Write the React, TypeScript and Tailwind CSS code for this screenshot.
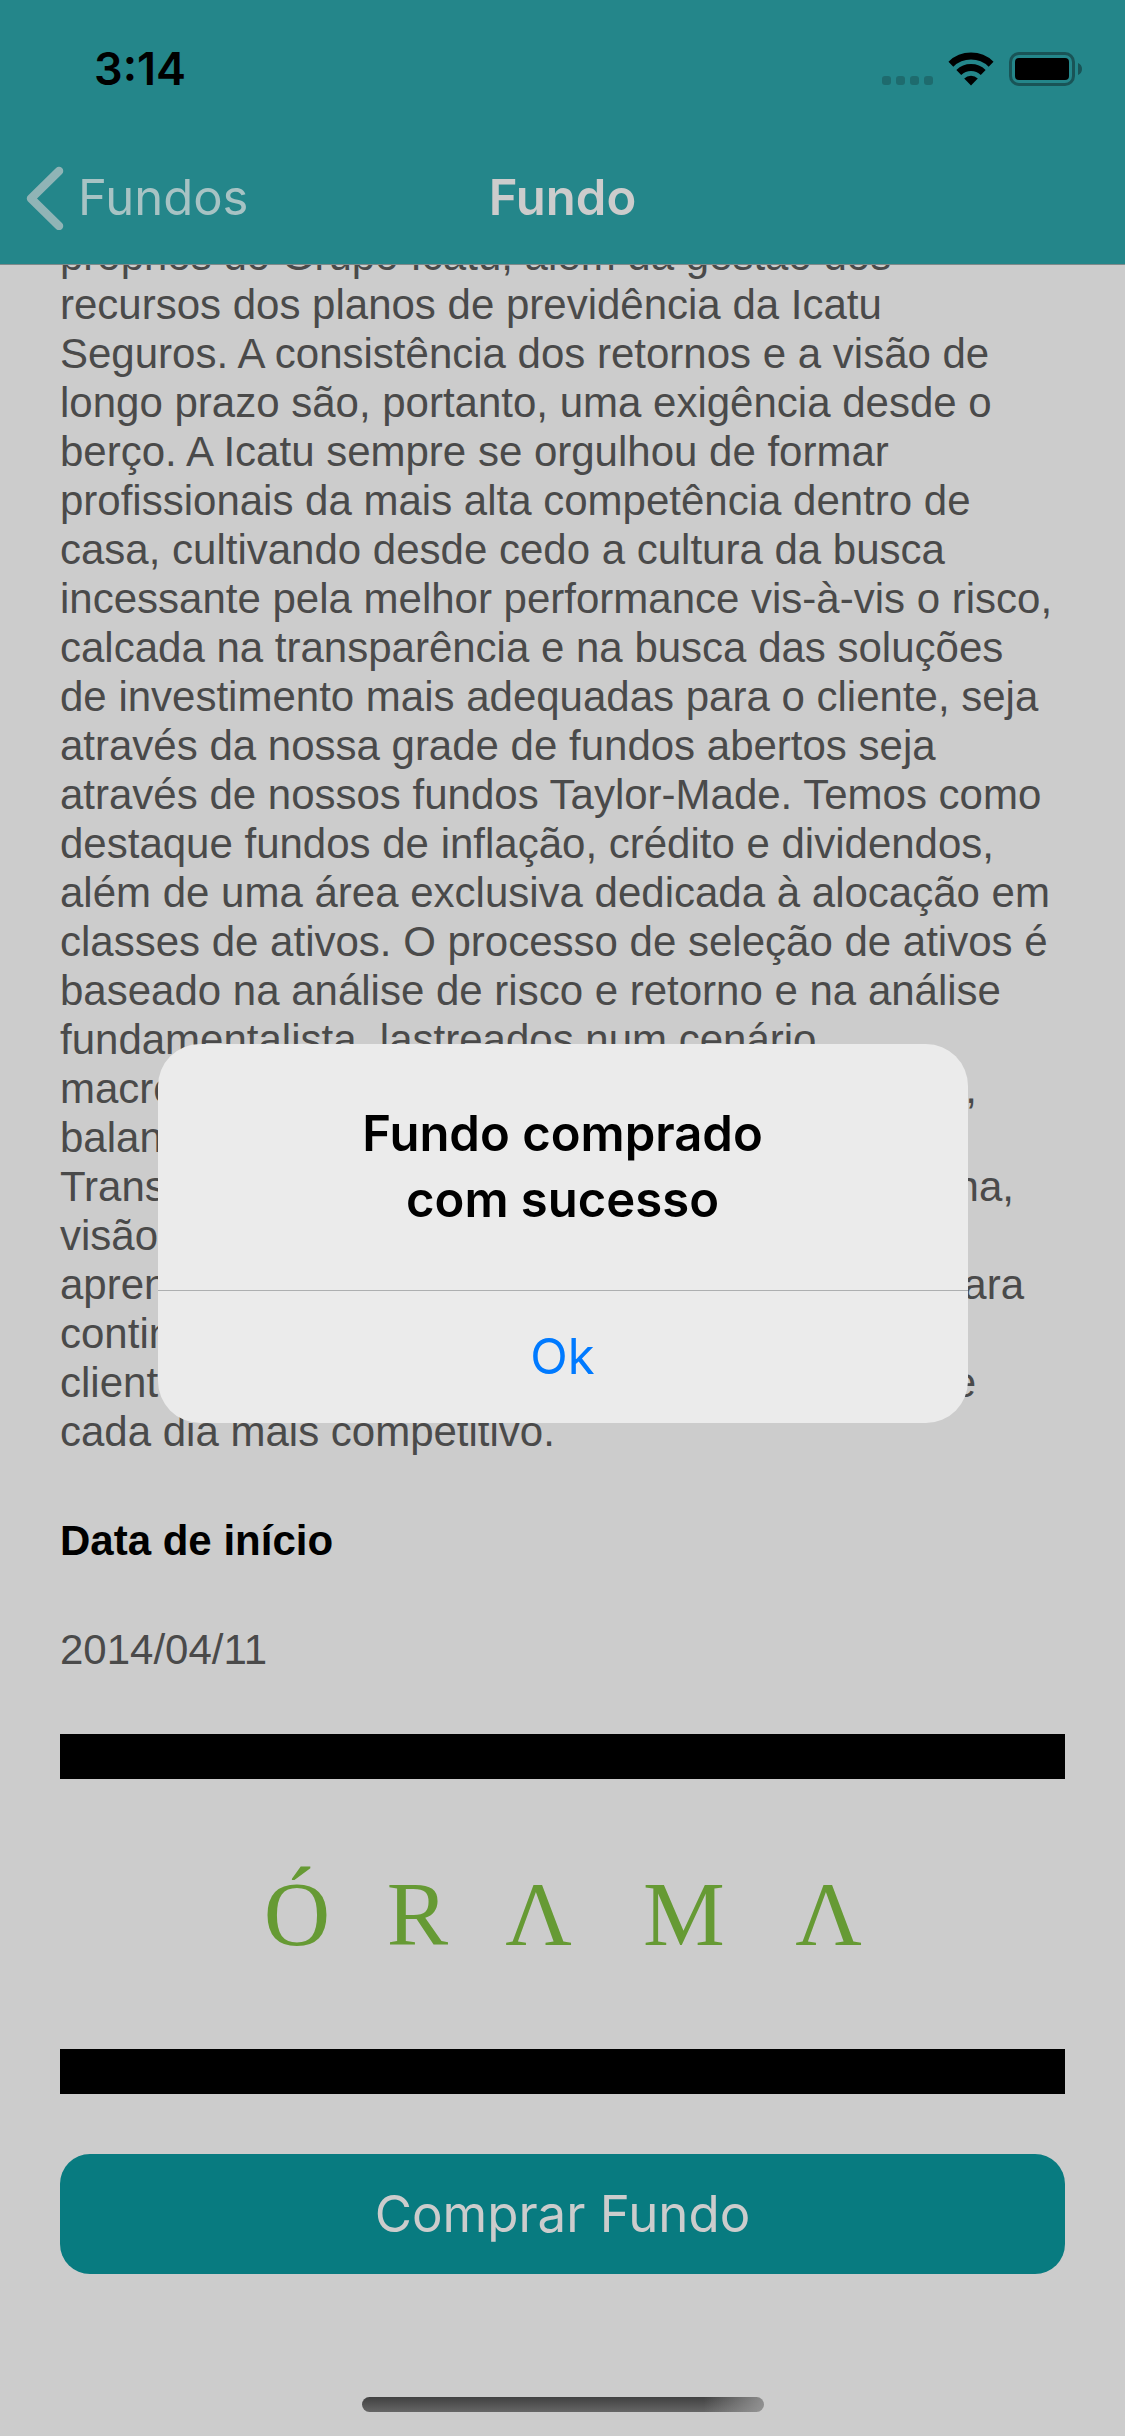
import React from "react";

type Line = string | { start: string; end: string; width: string };

const lines: Line[] = [
  "próprios do Grupo Icatu, além da gestão dos",
  "recursos dos planos de previdência da Icatu",
  "Seguros. A consistência dos retornos e a visão de",
  "longo prazo são, portanto, uma exigência desde o",
  "berço. A Icatu sempre se orgulhou de formar",
  "profissionais da mais alta competência dentro de",
  "casa, cultivando desde cedo a cultura da busca",
  "incessante pela melhor performance vis-à-vis o risco,",
  "calcada na transparência e na busca das soluções",
  "de investimento mais adequadas para o cliente, seja",
  "através da nossa grade de fundos abertos seja",
  "através de nossos fundos Taylor-Made. Temos como",
  "destaque fundos de inflação, crédito e dividendos,",
  "além de uma área exclusiva dedicada à alocação em",
  "classes de ativos. O processo de seleção de ativos é",
  "baseado na análise de risco e retorno e na análise",
  "fundamentalista, lastreados num cenário",
  { start: "macroeconômico e", end: "empresas,", width: "w-[917px]" },
  "balanços.",
  { start: "Transparência,", end: "disciplina,", width: "w-[954px]" },
  "visão de longo prazo e",
  { start: "aprendizado", end: "para", width: "w-[964px]" },
  "continuar a oferecer aos",
  { start: "clientes", end: "e", width: "w-[916px]" },
  "cada dia mais competitivo.",
];

function StatusBar() {
  return (
    <div className="flex h-[132px] items-center justify-between pt-[6px] pr-[42px] pl-[94px]">
      <time className="text-[45px] leading-[48px] font-semibold text-black">3:14</time>
      <div className="flex items-center gap-[15px]">
        <svg className="h-[34px] w-[51px]" viewBox="0 0 51 34" aria-hidden="true" fill="#1e6b6e">
          <rect x="0" y="24" width="9" height="9" rx="3" />
          <rect x="14" y="24" width="9" height="9" rx="3" />
          <rect x="28" y="24" width="9" height="9" rx="3" />
          <rect x="42" y="24" width="9" height="9" rx="3" />
        </svg>
        <svg className="h-[34px] w-[46px]" viewBox="0 0 46 34" role="img" aria-label="Wi-Fi">
          <g fill="none" stroke="#000" strokeWidth="7">
            <path d="M2.9 12.2A29 29 0 0 1 43.1 12.2" />
            <path d="M10.8 20.4A17.6 17.6 0 0 1 35.2 20.4" />
          </g>
          <path d="M23 33.5 16.2 26.6A9.6 9.6 0 0 1 29.8 26.6Z" fill="#000" />
        </svg>
        <svg className="h-[34px] w-[74px]" viewBox="0 0 74 34" role="img" aria-label="Bateria">
          <rect x="1.5" y="1.5" width="63" height="31" rx="8.5" fill="none" stroke="#195457" strokeWidth="3" />
          <rect x="6" y="6" width="54" height="22" rx="4" fill="#000" />
          <path d="M69 11c2.5 1 4 3.3 4 6s-1.5 5-4 6z" fill="#195457" />
        </svg>
      </div>
    </div>
  );
}

function NavBar() {
  return (
    <nav className="grid h-[132px] grid-cols-3 items-center px-[26px]">
      <a href="#fundos" className="flex items-center gap-[14px] text-[#a7c3c4]">
        <svg className="h-[64px] w-[38px]" viewBox="0 0 38 64" aria-hidden="true">
          <path
            d="M33 5 5 32.5 33 60"
            fill="none"
            stroke="#90b4b6"
            strokeWidth="8.5"
            strokeLinecap="round"
            strokeLinejoin="round"
          />
        </svg>
        <span className="text-[49px] leading-[64px]">Fundos</span>
      </a>
      <h1 className="text-center text-[49px] leading-[64px] font-semibold text-[#cccccc]">Fundo</h1>
    </nav>
  );
}

function Logo() {
  return (
    <div className="border-y-[45px] border-black">
      <div
        role="img"
        aria-label="ÓRAMA"
        className="mx-auto grid h-[270px] w-[658px] grid-cols-[127fr_114fr_128fr_163fr_126fr] items-center text-center font-['Liberation_Serif',serif] text-[92px] leading-[96px] text-[#669a34]"
      >
        <span>Ó</span>
        <span>R</span>
        <span>Λ</span>
        <span>M</span>
        <span>Λ</span>
      </div>
    </div>
  );
}

function Alert() {
  return (
    <div className="absolute inset-0 z-20 flex items-center justify-center pt-[132px] pb-[102px]">
      <div
        role="alertdialog"
        aria-modal="true"
        aria-labelledby="alert-title"
        className="w-[810px] overflow-hidden rounded-[42px] bg-[#ebebeb]"
      >
        <h2
          id="alert-title"
          className="px-12 py-[57px] text-center text-[49px] leading-[66px] font-semibold text-black"
        >
          Fundo comprado
          <br />
          com sucesso
        </h2>
        <button
          type="button"
          className="block h-[133px] w-full border-t border-[#adafb0] text-[49px] leading-[64px] text-[#007aff]"
        >
          Ok
        </button>
      </div>
    </div>
  );
}

export default function App() {
  return (
    <div className="relative flex min-h-screen flex-col overflow-hidden bg-[#cccccc] font-['Inter',sans-serif]">
      <header className="relative z-10 border-b border-[#7e8a8b] bg-[#24868a]">
        <StatusBar />
        <NavBar />
      </header>

      <main className="-mt-[34px] flex flex-col px-[60px] font-['Liberation_Sans',sans-serif] text-[42px] leading-[49px] text-[#4a4a4a]">
        <p>
          {lines.map((line, i) =>
            typeof line === "string" ? (
              <span key={i} className="block whitespace-nowrap">
                {line}{" "}
              </span>
            ) : (
              <span key={i} className={`flex max-w-full justify-between ${line.width}`}>
                <span>{line.start} </span>
                <span>{line.end} </span>
              </span>
            ),
          )}
        </p>
        <h2 className="mt-[60px] font-bold text-black">Data de início</h2>
        <p className="mt-[60px] mb-[60px]">2014/04/11</p>
        <Logo />
        <button
          type="button"
          className="mt-[60px] h-[120px] w-full rounded-[30px] bg-[#087b80] font-['Inter',sans-serif] text-[51px] leading-[64px] text-[#cccccc]"
        >
          Comprar Fundo
        </button>
      </main>

      <div className="mx-auto mt-auto mb-[24px] h-[15px] w-[402px] rounded-full bg-[linear-gradient(to_right,transparent_85%,#a0a0a0cc),linear-gradient(#404040,#666666)]" />
      <Alert />
    </div>
  );
}
